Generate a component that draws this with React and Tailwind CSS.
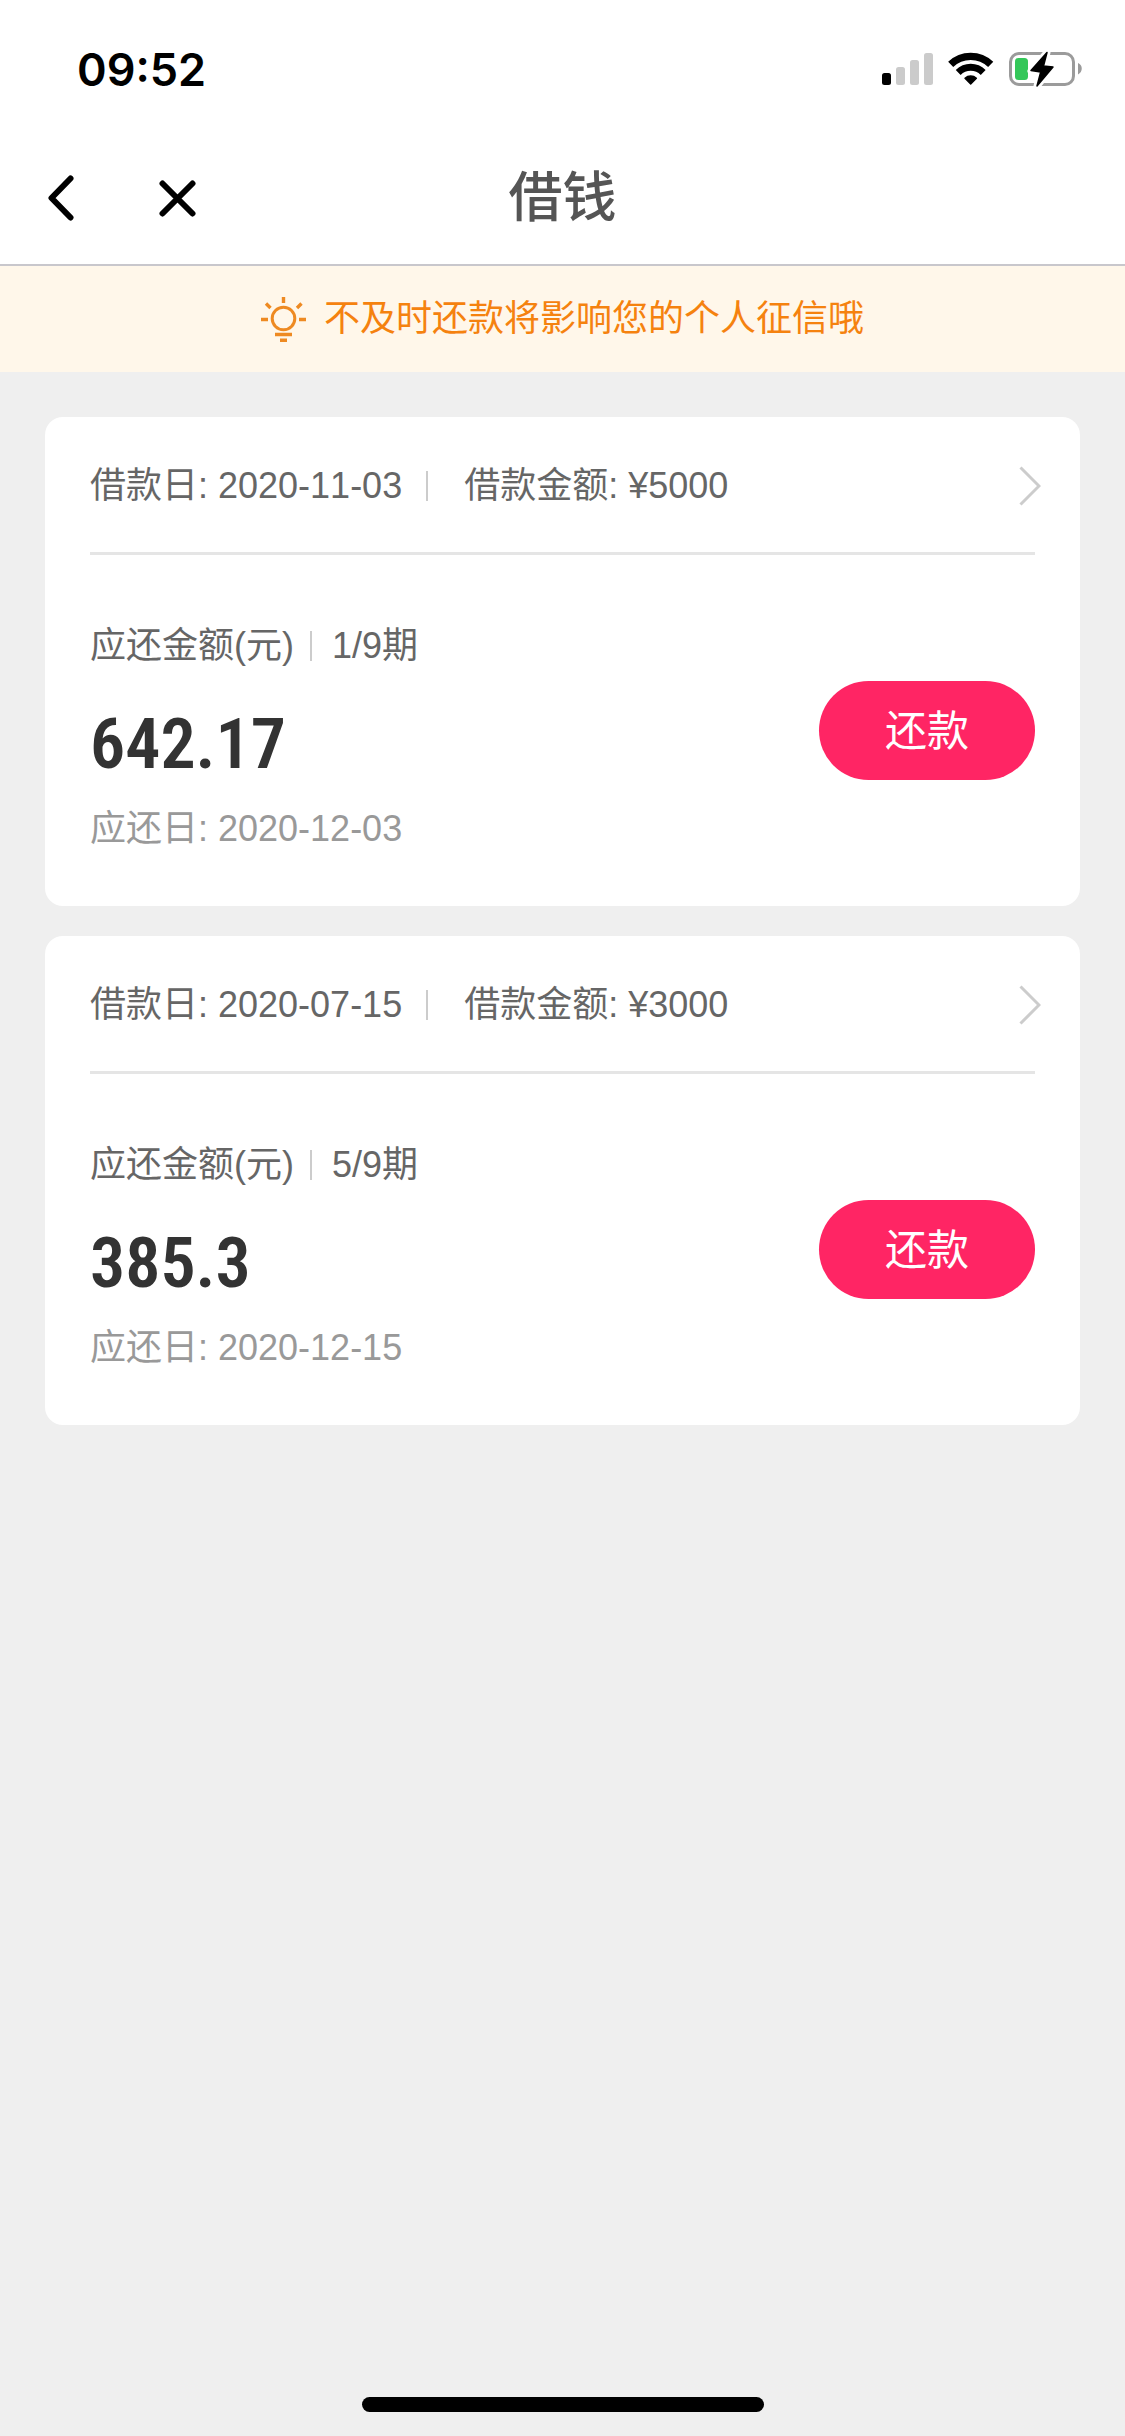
const loans = [
  {
    id: 1,
    borrowDate: '2020-11-03',
    principal: '¥5000',
    period: '1/9期',
    due: '642.17',
    dueDate: '2020-12-03',
  },
  {
    id: 2,
    borrowDate: '2020-07-15',
    principal: '¥3000',
    period: '5/9期',
    due: '385.3',
    dueDate: '2020-12-15',
  },
];

const SignalIcon = () => (
  <svg width="51" height="34" viewBox="0 0 51 34">
    <rect x="0" y="21" width="9" height="12" rx="2.5" fill="#000" />
    <rect x="14" y="15" width="9" height="18" rx="2.5" fill="#cbcbcb" />
    <rect x="28" y="8" width="9" height="25" rx="2.5" fill="#cbcbcb" />
    <rect x="42" y="1" width="9" height="32" rx="2.5" fill="#cbcbcb" />
  </svg>
);

const WifiIcon = () => (
  <svg width="46" height="34" viewBox="0 0 46 34">
    <g fill="none" stroke="#000">
      <path d="M2.7 12.4A29 29 0 0 1 42.7 12.4" strokeWidth="7.4" />
      <path d="M10.2 20.4A18 18 0 0 1 35.2 20.4" strokeWidth="7" />
    </g>
    <path
      d="M22.7 32L17 26.2A8.6 8.6 0 0 1 28.4 26.2Z"
      stroke="#000"
      strokeWidth="1.4"
      strokeLinejoin="round"
    />
  </svg>
);

const BatteryIcon = () => (
  <svg width="74" height="34" viewBox="0 0 74 34" className="overflow-visible">
    <rect x="1.5" y="1.5" width="63" height="31" rx="8.5" fill="none" stroke="#9b9b9b" strokeWidth="3" />
    <path d="M69 11C74 13 74 20 69 22.5Z" fill="#9b9b9b" />
    <rect x="6" y="6" width="13" height="22" rx="3.5" fill="#34c759" />
    <path
      d="M38 0.5L22 19H31.7L28 34L44 14.5H34.5Z"
      fill="#000"
      stroke="#fff"
      strokeWidth="7"
      strokeLinejoin="round"
    />
    <path
      d="M38 0.5L22 18.5L31.7 20L28 34L44 15L34.5 14Z"
      fill="#000"
      stroke="#000"
      strokeWidth="1.5"
      strokeLinejoin="round"
    />
  </svg>
);

const BulbIcon = () => (
  <svg width="45" height="45" viewBox="0 0 45 45" fill="none" stroke="#ee8a22" strokeWidth="3.4">
    <circle cx="22.5" cy="21.5" r="11.3" strokeWidth="3" />
    <path d="M22.5 0V6M0 22.5H7M38 22.5H45M5 6.5L9.5 11M40.5 6.5L36 11M14 37.5H31M19 43.3H26" />
  </svg>
);

const StatusBar = () => (
  <div className="flex h-[132px] items-center justify-between pt-1.5 pl-[77px] pr-[42px]">
    <span className="font-['Inter',sans-serif] text-[45px] leading-none font-semibold text-black">09:52</span>
    <div className="flex items-center gap-[15px]">
      <SignalIcon />
      <WifiIcon />
      <BatteryIcon />
    </div>
  </div>
);

const NavBar = () => (
  <nav className="grid h-[132px] grid-cols-[1fr_auto_1fr] items-center px-12">
    <div className="flex items-center gap-[85px]">
      <button type="button" aria-label="返回">
        <svg width="26" height="46" viewBox="0 0 26 46" fill="none" stroke="#000" strokeWidth="6" strokeLinecap="round" strokeLinejoin="round">
          <path d="M22.5 3.5L3.5 23L22.5 42.5" />
        </svg>
      </button>
      <button type="button" aria-label="关闭">
        <svg width="37" height="37" viewBox="0 0 37 37" fill="none" stroke="#000" strokeWidth="6" strokeLinecap="round">
          <path d="M3.5 3.5L33.5 33.5M33.5 3.5L3.5 33.5" />
        </svg>
      </button>
    </div>
    <h1 className="text-[54px] leading-none font-medium text-[#555]">借钱</h1>
  </nav>
);

const Separator = () => <span className="h-[30px] w-0.5 bg-[#ccc]" />;

const LoanCard = ({ loan }) => (
  <article className="rounded-[18px] bg-white text-4xl text-[#666] [font-kerning:none]">
    <a href={`#loan-${loan.id}`} className="flex h-[135px] items-center pt-[3px] pr-[39px] pl-[45px]">
      <span>借款日: {loan.borrowDate}</span>
      <span className="ml-6 flex items-center gap-9">
        <Separator />
        <span>借款金额: {loan.principal}</span>
      </span>
      <svg className="ml-auto" width="22" height="40" viewBox="0 0 22 40" fill="none" stroke="#ccc" strokeWidth="3">
        <path d="M1.5 1.5L20 20L1.5 38.5" />
      </svg>
    </a>
    <hr className="mx-[45px] border-t-[3px] border-[#e5e5e5]" />

    {/* Amount due */}
    <div className="flex items-center justify-between px-[45px]">
      <div className="pt-16 pb-[50px]">
        <p className="flex items-center leading-[54px]">
          <span>应还金额(元)</span>
          <span className="ml-4 flex items-center gap-5">
            <Separator />
            <span>{loan.period}</span>
          </span>
        </p>
        <p className="mt-[35px] font-['Roboto_Condensed',sans-serif] text-[70px] leading-[72px] font-semibold text-[#333]">
          {loan.due}
        </p>
        <p className="mt-[22px] leading-[54px] text-[#999]">应还日: {loan.dueDate}</p>
      </div>
      <button type="button" className="h-[99px] w-[216px] rounded-full bg-[#ff2564] pt-[3px] text-[42px] leading-none text-white">
        还款
      </button>
    </div>
  </article>
);

export default function App() {
  return (
    <div className="flex min-h-screen flex-col bg-[#efefef] font-['Liberation_Sans','Noto_Sans_CJK_SC',sans-serif]">
      <header className="border-b-2 border-[#c8c7cc] bg-white">
        <StatusBar />
        <NavBar />
      </header>

      {/* Notice */}
      <div className="flex h-[106px] items-center justify-center gap-[18px] bg-[#fff7ea] text-4xl text-[#f5820f]">
        <BulbIcon />
        <p>不及时还款将影响您的个人征信哦</p>
      </div>

      <main className="flex flex-1 flex-col gap-[30px] px-[45px] pt-[45px]">
        {loans.map((loan) => (
          <LoanCard key={loan.id} loan={loan} />
        ))}
      </main>

      <footer className="flex justify-center pb-6">
        <div className="h-[15px] w-[402px] rounded-full bg-black" />
      </footer>
    </div>
  );
}
